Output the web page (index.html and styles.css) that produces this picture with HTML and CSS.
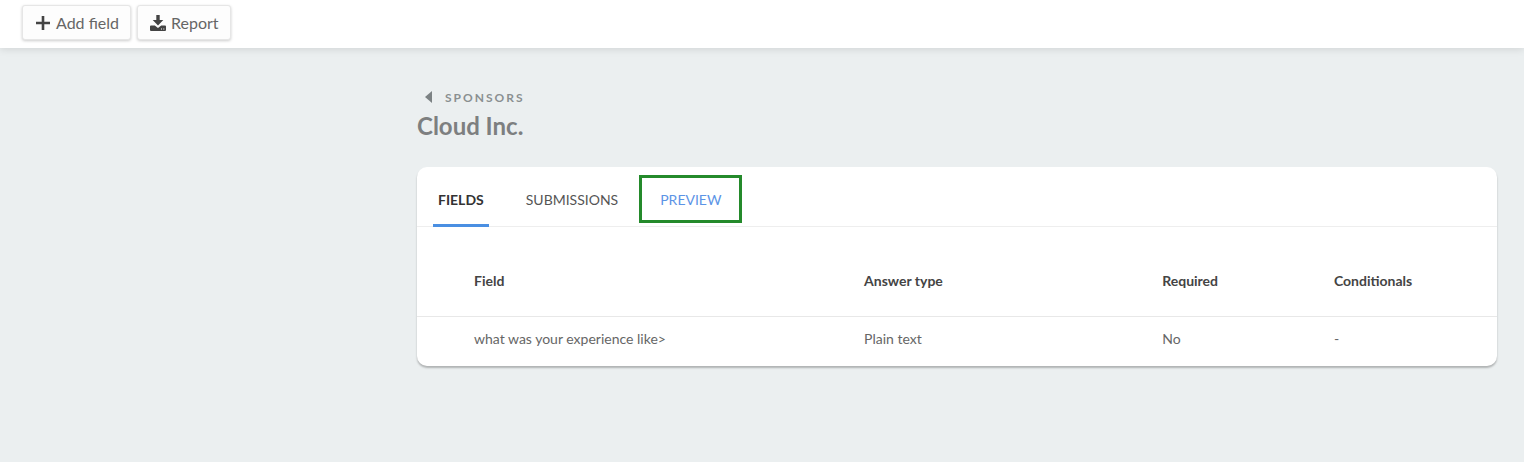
FILE: index.html
```html
<!DOCTYPE html>
<html lang="en">
  <head>
    <meta charset="UTF-8" />
    <meta name="viewport" content="width=device-width, initial-scale=1.0" />
    <title>Cloud Inc.</title>
    <link rel="stylesheet" href="styles.css">
  </head>
  <body>
    <header class="toolbar">
      <button type="button" class="btn">
        <svg class="icon" viewBox="0 0 16 16" aria-hidden="true">
          <path d="M6.700 1h2.600v5.700H15v2.600H9.300V15H6.700V9.300H1V6.700h5.700z" />
        </svg>
        Add field
      </button>
      <button type="button" class="btn">
        <svg class="icon" viewBox="0 0 16 16" aria-hidden="true">
          <path d="M6.300 0h3.400v5h3.600L8 10.500 2.700 5h3.600z" />
          <path fill-rule="evenodd" d="M1 10.500h3.800L8 13l3.200-2.500H15q1 0 1 1V15q0 1-1 1H1q-1 0-1-1v-3.500q0-1 1-1zM11 13.500v1h1v-1zM13.300 13.500v1h1v-1z" />
        </svg>
        Report
      </button>
    </header>
    <main class="content">
      <a class="back" href="#">
        <svg class="arrow" viewBox="0 0 7 12" aria-hidden="true">
          <path d="M7 0v12L0 6z" />
        </svg>
        Sponsors
      </a>
      <h1 class="title">Cloud Inc.</h1>

      <div class="card">
        <nav class="tabs">
          <a class="tab active" href="#">FIELDS</a>
          <a class="tab" href="#">SUBMISSIONS</a>
          <a class="tab preview" href="#">PREVIEW</a>
        </nav>
        <table class="fields">
          <thead>
            <tr>
              <th class="col-field">Field</th>
              <th class="col-type">Answer type</th>
              <th class="col-required">Required</th>
              <th>Conditionals</th>
            </tr>
          </thead>
          <tbody>
            <tr>
              <td class="col-field">what was your experience like&gt;</td>
              <td>Plain text</td>
              <td>No</td>
              <td>-</td>
            </tr>
          </tbody>
        </table>
      </div>
    </main>
  </body>
</html>
```

FILE: styles.css
```css
* {
    box-sizing: border-box;
}
body {
    min-height: 100vh;
    margin: 0;
    background-color: #ebeff0;
    color: #666;
    font-family: Lato, sans-serif;
    font-size: 14px;
    line-height: 20px;
}
a {
    color: inherit;
    text-decoration: none;
}
.toolbar {
    display: flex;
    gap: 6px;
    padding: 5px 22px 8px;
    background-color: white;
    box-shadow: 0 1px 8px rgba(0, 0, 0, 0.12);
}
.btn {
    display: flex;
    align-items: center;
    gap: 5px;
    height: 35px;
    padding: 0 11px 0 12px;
    border: 1px solid #e6e6e6;
    border-radius: 3px;
    background-color: #fdfdfd;
    box-shadow: 0 1px 3px rgba(0, 0, 0, 0.2);
    color: #666;
    font-family: inherit;
    font-size: 16px;
}
.icon {
    width: 16px;
    height: 16px;
    fill: #444;
}
.content {
    padding: 40px 27px 40px 417px;
}
.back {
    display: flex;
    align-items: center;
    gap: 13px;
    padding-left: 8px;
    color: #8a8f91;
    font-size: 12px;
    font-weight: bold;
    letter-spacing: 2px;
    text-transform: uppercase;
}
.arrow {
    width: 7px;
    height: 12px;
    margin-bottom: 3px;
    fill: #7c8284;
}
.title {
    margin: 3px 0 26px;
    color: #7d7f80;
    font-size: 24px;
    font-weight: bold;
    line-height: 30px;
}
.card {
    border-radius: 10px;
    background-color: white;
    box-shadow: 0 2px 2px rgba(0, 0, 0, 0.25);
}
.tabs {
    display: flex;
    align-items: flex-end;
    gap: 32px;
    height: 60px;
    padding-left: 16px;
    border-bottom: 1px solid #eee;
}
.tab {
    padding: 0 5px 13px;
    border-bottom: 3px solid transparent;
    color: #555;
    line-height: 20px;
}
.active {
    margin-bottom: -1px;
    padding-bottom: 14px;
    border-bottom-color: #4a8fe2;
    color: #333;
    font-weight: bold;
}
.preview {
    margin: 0 0 3px -16px;
    padding: 12px 18px 10px;
    border: 3px solid #248a2b;
    color: #5c94e6;
}
.fields {
    width: 100%;
    border-collapse: collapse;
    table-layout: fixed;
    text-align: left;
}
.fields th {
    height: 89px;
    padding: 20px 0 0;
    border-bottom: 1px solid #e8e8e8;
    color: #444;
    font-weight: bold;
}
.fields td {
    height: 50px;
    padding: 0 0 5px;
}
.fields .col-field {
    width: 41.4%;
    padding-left: 57px;
}
.col-type {
    width: 27.6%;
}
.col-required {
    width: 15.9%;
}
```
